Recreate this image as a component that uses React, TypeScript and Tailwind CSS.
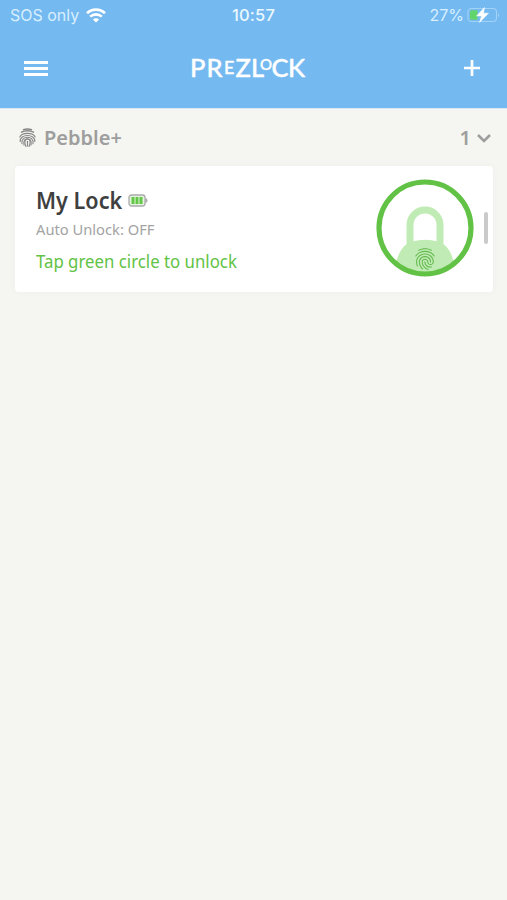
import React from 'react';
import { MdFingerprint } from 'react-icons/md';

const WifiIcon = () => (
  <svg className="block h-[15px] w-5" viewBox="0 0 20 15" fill="none" stroke="white">
    <path d="M1 5.2C6 0.4 14 0.4 19 5.2" strokeWidth="2.8" />
    <path d="M4.2 8.6C7.5 5.6 12.5 5.6 15.8 8.6" strokeWidth="2.6" />
    <path d="M10 14.6L6.9 11.4C8.6 9.9 11.4 9.9 13.1 11.4Z" fill="white" stroke="none" />
  </svg>
);

const PhoneBattery = () => (
  <svg className="block h-4 w-[33px]" viewBox="0 0 33 16" fill="none">
    <rect x="1" y="1.5" width="28.5" height="13" rx="3.5" stroke="#a3d2f7" strokeWidth="1.1" />
    <path d="M31 6v4c1.2-.5 1.2-3.5 0-4z" fill="#a9d5f8" />
    <path d="M4.5 3.2H10.5V12.8H4.5a1.5 1.5 0 0 1-1.5-1.5V4.7a1.5 1.5 0 0 1 1.5-1.5z" fill="#62d46c" />
    <path d="M17.5 0.5L9.5 9h5L12.5 15.5l9-9.3h-5z" fill="white" stroke="white" strokeWidth=".5" />
  </svg>
);

const Wordmark = () => (
  <svg
    className="block h-10 w-[120px] overflow-visible font-['Lato','Liberation_Sans',sans-serif] font-medium"
    viewBox="0 0 120 40"
    fill="white"
    stroke="white"
    strokeWidth=".4"
    strokeLinejoin="round"
  >
    <text y="28.5" fontSize="25.5">
      <tspan x="1">P</tspan>
      <tspan x="17.5">R</tspan>
      <tspan x="35" y="26" fontSize="18">E</tspan>
      <tspan x="46.5" y="28.5" fontSize="25.5">Z</tspan>
      <tspan x="62">L</tspan>
      <tspan x="71" y="21.5" fontSize="15">O</tspan>
      <tspan x="82.5" y="28.5" fontSize="25.5">C</tspan>
      <tspan x="99">K</tspan>
    </text>
  </svg>
);

const LockBattery = () => (
  <svg className="block h-[13px] w-5" viewBox="0 0 20 13" fill="none">
    <rect x="1" y="1" width="16" height="11" rx="2.5" fill="#e4f5df" stroke="#aaaaaa" strokeWidth="1.3" />
    <path d="M18 4.5c1.3.5 1.3 3.5 0 4z" fill="#aaaaaa" stroke="#aaaaaa" />
    <path d="M5 3v7M9 3v7M13 3v7" stroke="#62c646" strokeWidth="3" />
  </svg>
);

// dense ridges with a flattened cap, reads well at small sizes
const PebbleIcon = () => (
  <svg className="block h-5 w-[17px]" viewBox="0 0 17 20" fill="none" stroke="#858585" strokeWidth="1.1" strokeLinecap="round">
    <path d="M4.5 1.8C7 .8 10 .8 12.5 1.8" strokeWidth="1.5" />
    <path d="M2.5 4.2C6 2.5 11 2.5 14.5 4.2" strokeWidth="1.5" />
    <path d="M.8 9C3 4.2 14 4.2 16.2 9" />
    <path d="M1.2 13.5C.5 5.5 16.5 5.5 15.8 13.5" />
    <path d="M3 15.8C1.2 7 15.8 7 14 15.8" />
    <path d="M5 17.2C2.8 8.5 14.2 8.5 12 17.2" />
    <path d="M7 18.5C5.5 15 5 11 8.5 11S11.5 15 10 18.5" />
    <path d="M8.5 13.2V18" />
  </svg>
);

const UnlockButton = () => (
  <button className="relative block size-[98px]">
    <svg className="block size-full" viewBox="0 0 98 98" fill="none">
      <clipPath id="lock-clip">
        <circle cx="49" cy="49" r="46" />
      </clipPath>
      <g clipPath="url(#lock-clip)">
        <path d="M34 68V46a15 15 0 0 1 30 0V68" stroke="#c1ebb5" strokeWidth="7" />
        <path d="M20 98V85C22 73 28 65 36 62.5Q49 59 62 62.5C70 65 76 73 78 85V98Z" fill="#c1ebb5" />
      </g>
      <circle cx="49" cy="49" r="46" stroke="#62c245" strokeWidth="5.2" />
    </svg>
    <MdFingerprint className="absolute left-[36px] top-[67px] size-[26px] text-[#62b94c]" />
  </button>
);

const StatusBar = () => (
  <div className="grid h-[30px] grid-cols-[1fr_auto_1fr] items-center pl-[10px] pr-[7px] font-['Inter','Liberation_Sans',sans-serif] text-[16px]">
    <div className="flex items-center gap-[7px] text-[#d8f0ff]">
      <span className="whitespace-nowrap">SOS only</span>
      <WifiIcon />
    </div>
    <span className="pr-[3px] text-center text-[16.5px] font-medium tracking-[0.2px] text-[#eaf8ff]">10:57</span>
    <div className="flex items-center justify-end gap-[3px] text-[#d8f0ff]">
      <span>27%</span>
      <PhoneBattery />
    </div>
  </div>
);

const Header = () => (
  <header className="h-[109px] border-b border-[#dbe9f4] bg-[#74b9f0]">
    <StatusBar />
    <div className="flex h-[76px] items-center pl-6 pr-[26px]">
      <button className="flex w-6 flex-col gap-[3px]">
        <span className="h-[3px] bg-white" />
        <span className="h-[3px] bg-white" />
        <span className="h-[3px] bg-white" />
      </button>
      <div className="ml-[141px] flex-1">
        <Wordmark />
      </div>
      <svg className="block size-[18px]" viewBox="0 0 18 18" stroke="white" strokeWidth="2.7">
        <path d="M9 1v16M1 9h16" />
      </svg>
    </div>
  </header>
);

const SectionHeader = () => (
  <div className="flex h-[57px] items-center justify-between pl-[19px] pr-4 text-[#9e9e9e]">
    <div className="flex items-center gap-2">
      <PebbleIcon />
      <span className="text-[20px] font-semibold leading-6">Pebble+</span>
    </div>
    <div className="flex items-center gap-[6px]">
      <span className="text-[20px] font-semibold leading-6">1</span>
      <svg className="block h-[10px] w-[14px]" viewBox="0 0 14 10" fill="none" stroke="currentColor" strokeWidth="2.6">
        <path d="M1 2L7 8L13 2" />
      </svg>
    </div>
  </div>
);

const LockCard = () => (
  <div className="ml-[15px] mr-[14px] flex h-[126px] items-center justify-between rounded bg-white pl-[21px] pr-[5px] shadow-[0_0_8px_rgba(0,0,0,0.03)]">
    <div className="flex flex-col">
      <div className="flex h-7 w-[112px] items-center justify-between pt-[3px]">
        <span className="w-[86px] origin-left scale-x-[0.96] whitespace-nowrap text-[22.5px] font-semibold text-[#3f3f3f]">
          My Lock
        </span>
        <LockBattery />
      </div>
      <span className="mt-1 origin-left scale-x-[0.98] whitespace-nowrap text-[15px] leading-6 text-[#a3a3a3]">
        Auto Unlock: OFF
      </span>
      <span className="mt-2 origin-left scale-x-[0.96] whitespace-nowrap text-[17.5px] leading-6 text-[#62c245]">
        Tap green circle to unlock
      </span>
    </div>
    <div className="flex items-center gap-[10px] pb-[3px]">
      <UnlockButton />
      <span className="h-8 w-1 rounded-full bg-[#cacaca]" />
    </div>
  </div>
);

const App: React.FC = () => {
  return (
    <div className="h-[900px] w-[507px] overflow-hidden bg-[#f5f6f1] font-['Noto_Sans','Open_Sans',sans-serif]">
      <Header />
      <SectionHeader />
      <LockCard />
    </div>
  );
};

export default App;
